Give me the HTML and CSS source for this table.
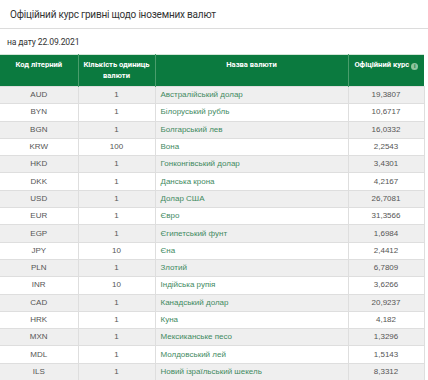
FILE: index.html
```html
<!DOCTYPE html>
<html lang="uk">
<head>
<meta charset="utf-8">
<link rel="stylesheet" href="styles.css">
</head>
<body>
<div class="page">
  <h1 class="title">Офіційний курс гривні щодо іноземних валют</h1>
  <div class="date">на дату 22.09.2021</div>
  <table class="rates">
    <colgroup>
      <col class="c1"><col class="c2"><col class="c3"><col class="c4">
    </colgroup>
    <thead>
      <tr>
        <th>Код літерний</th>
        <th>Кількість одиниць валюти</th>
        <th>Назва валюти</th>
        <th class="nowrap">Офіційний курс <span class="info">i</span></th>
      </tr>
    </thead>
    <tbody>
      <tr><td>AUD</td><td>1</td><td class="name">Австралійський долар</td><td>19,3807</td></tr>
      <tr><td>BYN</td><td>1</td><td class="name">Білоруський рубль</td><td>10,6717</td></tr>
      <tr><td>BGN</td><td>1</td><td class="name">Болгарський лев</td><td>16,0332</td></tr>
      <tr><td>KRW</td><td>100</td><td class="name">Вона</td><td>2,2543</td></tr>
      <tr><td>HKD</td><td>1</td><td class="name">Гонконгівський долар</td><td>3,4301</td></tr>
      <tr><td>DKK</td><td>1</td><td class="name">Данська крона</td><td>4,2167</td></tr>
      <tr><td>USD</td><td>1</td><td class="name">Долар США</td><td>26,7081</td></tr>
      <tr><td>EUR</td><td>1</td><td class="name">Євро</td><td>31,3566</td></tr>
      <tr><td>EGP</td><td>1</td><td class="name">Єгипетський фунт</td><td>1,6984</td></tr>
      <tr><td>JPY</td><td>10</td><td class="name">Єна</td><td>2,4412</td></tr>
      <tr><td>PLN</td><td>1</td><td class="name">Злотий</td><td>6,7809</td></tr>
      <tr><td>INR</td><td>10</td><td class="name">Індійська рупія</td><td>3,6266</td></tr>
      <tr><td>CAD</td><td>1</td><td class="name">Канадський долар</td><td>20,9237</td></tr>
      <tr><td>HRK</td><td>1</td><td class="name">Куна</td><td>4,182</td></tr>
      <tr><td>MXN</td><td>1</td><td class="name">Мексиканське песо</td><td>1,3296</td></tr>
      <tr><td>MDL</td><td>1</td><td class="name">Молдовський лей</td><td>1,5143</td></tr>
      <tr><td>ILS</td><td>1</td><td class="name">Новий ізраїльський шекель</td><td>8,3312</td></tr>
    </tbody>
  </table>
</div>
</body>
</html>
```
FILE: styles.css
```css
html, body {
  margin: 0;
  padding: 0;
  background: #fff;
}
.page {
  width: 428px;
  font-family: Roboto, "Liberation Sans", sans-serif;
  color: #333;
}
.title {
  margin: 0;
  padding: 9px 10px 0 10px;
  height: 19px;
  font-size: 10px;
  font-weight: 400;
  line-height: 12px;
  letter-spacing: -0.2px;
  color: #333;
  border-bottom: 1px solid #dcdcdc;
}
.date {
  padding: 8px 7px 0 7px;
  height: 17px;
  font-size: 8.6px;
  line-height: 11px;
  letter-spacing: -0.15px;
  color: #333;
}
.rates {
  width: 424px;
  border-collapse: collapse;
  table-layout: fixed;
  border-top: 1px solid #d3e6d8;
}
.c1 { width: 78px; }
.c2 { width: 77px; }
.c3 { width: 193px; }
.c4 { width: 76px; }
.rates th {
  background: #0b7a3f;
  color: #fff;
  font-family: Roboto, "Liberation Sans", sans-serif;
  font-size: 7.6px;
  font-weight: 700;
  line-height: 11px;
  vertical-align: top;
  text-align: center;
  padding: 4px 2px 0 2px;
  height: 27px;
  border-left: 1px solid #4a9d6c;
}
.rates th:first-child { border-left: none; }
.rates th.nowrap { white-space: nowrap; }
.info {
  display: inline-block;
  width: 7px;
  height: 7px;
  border-radius: 50%;
  background: #8fc49f;
  color: #0b7a3f;
  font-size: 5.5px;
  line-height: 7px;
  text-align: center;
  vertical-align: -1px;
}
.rates td {
  font-family: "Liberation Sans Narrow", "Arial Narrow", "Liberation Sans", sans-serif;
  font-size: 8px;
  color: #555;
  text-align: center;
  height: 16.3px;
  padding: 0 5px;
  line-height: 10px;
  border-top: 1px solid #dedede;
  border-left: 1px solid #dedede;
}
.rates td:first-child { border-left: none; }
.rates td:last-child { border-right: 1px solid #dedede; }
.rates td.name {
  text-align: left;
  color: #3f8a5f;
}
.rates tbody tr:nth-child(odd) td { background: #efefef; }
.rates tbody tr:nth-child(even) td { background: #fff; }
```
